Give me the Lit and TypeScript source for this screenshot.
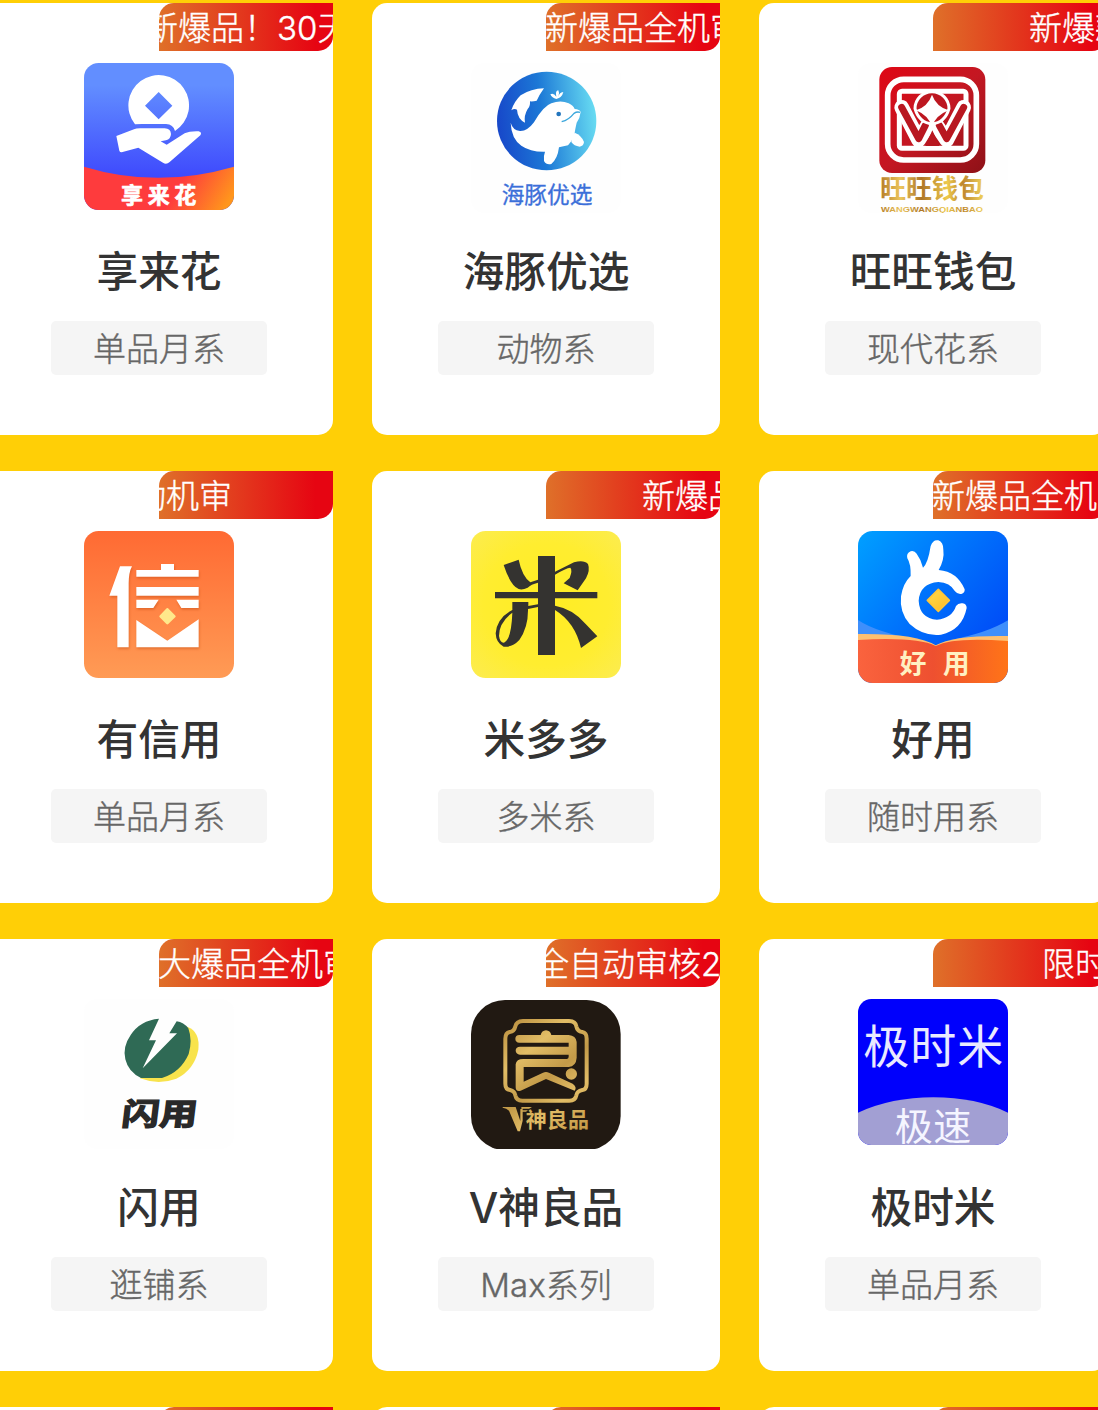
import { LitElement, html, svg, css } from "lit";
import { customElement, property } from "lit/decorators.js";

const logos: Record<string, unknown> = {
  xianglaihua: svg`<svg viewBox="30 27 450 450">
    <defs>
      <clipPath id="c"><rect x="30" y="27" width="450" height="441" rx="44"/></clipPath>
      <linearGradient id="b" x1="0" y1="0" x2="0" y2="1"><stop offset=".15" stop-color="#628eff"/><stop offset=".8" stop-color="#3d47fd"/></linearGradient>
      <linearGradient id="r" gradientUnits="userSpaceOnUse" x1="330" y1="370" x2="460" y2="450"><stop offset="0" stop-color="#fe3b3d"/><stop offset="1" stop-color="#ff961c"/></linearGradient>
    </defs>
    <g clip-path="url(#c)">
      <rect x="30" y="27" width="450" height="441" fill="url(#b)"/>
      <path d="M30 338Q250 405 480 338V468H30Z" fill="url(#r)"/>
      <path fill-rule="evenodd" d="M183 211A91 91 0 1 1 303 231Q298 211 276 210H204Q190 210 183 211ZM254 114L213 155L254 196L295 155Z" fill="#fff"/>
      <path d="M127 246L180 226Q186 223 198 223H272Q290 224 291 240Q290 256 276 259L260 262L278 272L332 238Q347 231 374 232Q385 235 379 244L287 324Q277 333 267 326L193 281L143 295Q137 295 136 290Z" fill="#fff"/>
    </g>
    <g font-size="66" font-weight="700" fill="#fff" stroke="#fff" stroke-width="2"><text x="141" y="448" textLength="226">享来花</text></g>
  </svg>`,
  haitun: svg`<svg viewBox="33 39 450 450">
    <defs><linearGradient id="b" x1="0" y1=".55" x2="1" y2=".45"><stop offset="0" stop-color="#1747c9"/><stop offset=".45" stop-color="#1c78d6"/><stop offset="1" stop-color="#68dcf2"/></linearGradient></defs>
    <rect x="33" y="39" width="450" height="450" rx="40" fill="#fefefe"/>
    <ellipse cx="260" cy="213" rx="149" ry="148" fill="url(#b)"/>
    <path d="M152 218Q158 240 180 243Q202 244 222 217Q250 168 274 160Q302 149 326 160Q340 167 344 177Q359 178 362 186Q360 205 350 218Q345 240 344 249Q340 269 324 286L297 292Q293 326 274 342Q259 346 252 333Q250 318 255 305Q211 306 184 287Q154 266 152 218Z" fill="#fff"/>
    <path d="M154 181Q163 154 182 136Q213 116 252 115Q237 136 230 152Q218 155 210 154Q211 169 203 177Q191 197 195 218Q173 207 171 179Q163 174 154 181Z" fill="#fff"/>
    <path d="M344 248Q365 256 372 276Q371 288 359 290Q342 288 334 276Q333 266 344 248Z" fill="#fff"/>
    <circle cx="296" cy="192" r="7" fill="#2375bd"/><path d="M305 215Q326 210 342 190Q351 184 360 187" fill="none" stroke="#3ca7dc" stroke-width="4"/>
    <path d="M289 147Q276 144 271 133Q281 128 289 140Q285 122 295 121Q300 130 295 141Q297 127 310 126Q306 143 289 147Z" fill="#fff"/>
    <text x="125" y="458" font-size="68" font-weight="400" fill="#3b6fd9" stroke="#3b6fd9" stroke-width="1" textLength="272">海豚优选</text>
  </svg>`,
  wangwang: svg`<svg viewBox="24 39 450 450">
    <defs>
      <linearGradient id="r" x1="0" y1="0" x2="1" y2="1"><stop offset="0" stop-color="#df0715"/><stop offset=".5" stop-color="#c41722"/><stop offset="1" stop-color="#8d1117"/></linearGradient>
      <linearGradient id="g" gradientUnits="userSpaceOnUse" x1="90" y1="0" x2="400" y2="0"><stop offset="0" stop-color="#b47b28"/><stop offset=".2" stop-color="#ecc65b"/><stop offset=".4" stop-color="#ad7527"/><stop offset=".65" stop-color="#edc94d"/><stop offset=".8" stop-color="#be862e"/><stop offset="1" stop-color="#efd15c"/></linearGradient>
    </defs>
    <rect x="24" y="39" width="450" height="450" rx="40" fill="#fefefe"/>
    <rect x="88" y="51" width="318" height="318" rx="38" fill="url(#r)"/>
    <rect x="113" y="88" width="266" height="242" rx="48" fill="none" stroke="#fff" stroke-width="17"/>
    <rect x="148" y="124" width="200" height="171" rx="8" fill="none" stroke="#fff" stroke-width="15"/>
    <g fill="none" stroke-linecap="round" stroke-linejoin="round">
      <path d="M155 172L206 270L246 205L290 270L341 172" stroke="#fff" stroke-width="44"/>
      <path d="M155 172L206 266L226 226M341 172L290 266L268 226" stroke="#b81720" stroke-width="21"/>
    </g>
    <path d="M226 288L247 241L268 288Z" fill="#b81720"/>
    <path d="M195 176A51 51 0 0 1 297 176Q285 218 246 222Q207 218 195 176Z" fill="#bd1720" stroke="#fff" stroke-width="9"/>
    <path d="M246 134Q258 169 296 181Q257 196 246 230Q235 196 198 181Q234 169 246 134Z" fill="#fff"/>
    <text x="90" y="444" font-size="78" font-weight="700" fill="url(#g)" textLength="312">旺旺钱包</text>
    <text x="93" y="487" font-size="20" font-weight="700" fill="url(#g)" textLength="306" lengthAdjust="spacingAndGlyphs" class="latin">WANGWANGQIANBAO</text>
  </svg>`,
  youxinyong: svg`<svg viewBox="30 33 450 450">
    <defs><linearGradient id="o" x1="0" y1="0" x2="0" y2="1"><stop offset="0" stop-color="#ff6a33"/><stop offset="1" stop-color="#ff9b55"/></linearGradient></defs>
    <rect x="30" y="33" width="450" height="441" rx="44" fill="url(#o)"/>
    <g fill="#fff" class="lift">
      <path d="M138 139H174Q164 158 164 190V382H130V227H106Z"/>
      <path d="M187 150H261V132H300V150H374V170H187ZM187 201H374V227H187ZM187 239H254L238 264H187ZM307 239H374V264H322ZM187 300L280 362L374 298V382H187Z"/>
    </g>
    <path d="M280 268L301 289L280 309L260 289Z" fill="#ffe88b" stroke="#ffe88b" stroke-width="8" stroke-linejoin="round"/>
  </svg>`,
  miduoduo: svg`<svg viewBox="33 33 450 450">
    <defs><radialGradient id="y" r=".7"><stop offset="0" stop-color="#ffed22"/><stop offset=".6" stop-color="#ffed30"/><stop offset="1" stop-color="#fcec50"/></radialGradient></defs>
    <rect x="33" y="33" width="450" height="441" rx="44" fill="url(#y)"/>
    <g fill="#343330">
      <path d="M234 108H285V405H234ZM105 216H412V235H105Z"/>
      <path d="M131 135L176 119Q186 168 211 187L234 179V188Q213 193 203 203Q187 211 176 207Q151 197 131 135Z"/>
      <path d="M285 155L342 127Q372 119 384 132Q391 150 378 175L353 211L311 190L329 174Q338 150 331 143Q318 144 285 164Z"/>
      <path d="M285 257Q340 267 377 312L412 349L363 384Q345 307 285 270Z"/>
      <path fill-rule="evenodd" d="M157 246H205V258L234 253V261L204 267Q205 322 178 360Q156 383 131 380Q108 369 107 340Q111 294 157 270ZM157 278Q117 308 117 348Q120 369 132 368Q154 359 157 278Z"/>
    </g>
  </svg>`,
  haoyong: svg`<svg viewBox="24 33 450 456" class="tall">
    <defs>
      <clipPath id="c"><rect x="24" y="33" width="450" height="456" rx="44"/></clipPath>
      <linearGradient id="b" x1="0" y1="0" x2="1" y2=".8"><stop offset="0" stop-color="#00a0ff"/><stop offset=".45" stop-color="#0075fc"/><stop offset="1" stop-color="#0044f6"/></linearGradient>
      <linearGradient id="o" x1="0" y1="0" x2="1" y2="0"><stop offset="0" stop-color="#fa633e"/><stop offset=".5" stop-color="#ee5030"/><stop offset="1" stop-color="#ff7418"/></linearGradient>
      <linearGradient id="g" x1="0" y1="0" x2="1" y2="1"><stop offset="0" stop-color="#ffdc4b"/><stop offset="1" stop-color="#ffb925"/></linearGradient>
    </defs>
    <g clip-path="url(#c)">
      <rect x="24" y="33" width="450" height="456" fill="url(#b)"/>
      <path d="M24 300Q80 338 215 362L24 350ZM474 301Q410 340 300 360L474 352Z" fill="#3f8ffb"/>
      <path d="M24 342Q200 340 257 376Q310 345 474 348V400H24Z" fill="#ffc070"/>
      <path d="M24 360Q200 350 257 378Q310 350 474 363V489H24Z" fill="url(#o)"/>
    </g>
    <path d="M182 168Q183 132 172 115Q168 100 182 94Q193 91 200 101Q214 120 219 143Q234 130 242 78Q249 58 265 61Q280 66 280 89Q284 118 266 150Q322 155 344 208Q345 219 334 222Q323 224 315 214Q300 187 265 186Q210 190 206 242Q209 295 261 299Q306 295 318 258Q325 248 338 250Q350 252 350 264Q337 330 273 344Q220 350 179 312Q148 278 153 229Q159 190 182 168Z" fill="#fff"/>
    <path d="M265 208L298 241L265 274L232 241Z" fill="url(#g)" stroke="#ffc638" stroke-width="5" stroke-linejoin="round"/>
    <g font-size="80" font-weight="700" fill="#fff0c2"><text x="149" y="458">好</text><text x="279" y="458">用</text></g>
  </svg>`,
  shanyong: svg`<svg viewBox="30 27 450 450">
    <rect x="30" y="27" width="450" height="450" rx="40" fill="#fefefe"/>
    <path d="M340 110Q379 125 373 179Q361 239 307 266Q253 286 198 265Z" fill="#f8e34c"/>
    <path d="M255 86Q198 91 170 135Q145 171 154 208Q163 246 201 264H264Q320 247 344 192Q356 151 343 115Q329 97 308 94L286 130H309L206 235L246 151H225Z" fill="#2f6a55"/>
    <text x="145" y="406" font-size="92" font-weight="700" fill="#292929" stroke="#292929" stroke-width="4" textLength="226" lengthAdjust="spacingAndGlyphs" class="slant">闪用</text>
  </svg>`,
  vshen: svg`<svg viewBox="33 27 450 450">
    <defs><linearGradient id="g" gradientUnits="userSpaceOnUse" x1="130" y1="90" x2="380" y2="400"><stop offset="0" stop-color="#b78b3c"/><stop offset=".3" stop-color="#e2bd66"/><stop offset=".55" stop-color="#c39a48"/><stop offset=".75" stop-color="#e2bd66"/><stop offset="1" stop-color="#c79c4a"/></linearGradient></defs>
    <rect x="33" y="30" width="449" height="450" rx="102" fill="#211912"/>
    <path d="M189 93H327Q347 94 349 109Q352 124 367 126Q380 128 380 146V281Q380 298 367 300Q351 303 349 316Q346 332 328 332H187Q169 332 166 316Q164 303 150 300Q136 298 136 281V146Q136 129 149 126Q163 124 166 109Q169 94 189 93Z" fill="none" stroke="url(#g)" stroke-width="12"/>
    <g fill="url(#g)">
      <path d="M178 135H242Q245 122 258 121Q271 122 274 135H326Q348 137 350 156V203Q348 229 326 231H191V275L249 248Q258 244 267 248L338 281Q352 291 344 302L258 267L182 302Q167 306 167 292V223Q169 207 190 207H321Q326 206 326 200V194H180Q167 193 167 181Q168 170 180 170H326V158H178Q166 157 166 146Q166 136 178 135Z"/>
      <circle cx="334" cy="252" r="17"/>
      <path d="M128 351H167L181 393V357H188V392L180 424H173L147 362Q140 354 128 353ZM184 351H216L207 356H188V361H204L198 365H185Z"/>
      <text x="197" y="411" font-size="63" font-weight="700" textLength="190">神良品</text>
    </g>
  </svg>`,
  jishimi: svg`<svg viewBox="24 27 450 450">
    <defs><clipPath id="c"><rect x="24" y="27" width="450" height="438" rx="40"/></clipPath></defs>
    <g clip-path="url(#c)">
      <rect x="24" y="27" width="450" height="438" fill="#0000fc"/>
      <path d="M24 368Q125 322 250 322Q378 322 474 368V465H24Z" fill="#a29fd3"/>
      <text x="40" y="220" font-size="138" fill="#e9e9ff" textLength="420">极时米</text>
      <text x="134" y="450" font-size="114" fill="#f5f5ff" textLength="230">极速</text>
    </g>
  </svg>`,
};

interface Product {
  name: string;
  series: string;
  promo: string;
  shift: number;
  logo: string;
}

const products: Product[] = [
  { name: "享来花", series: "单品月系", promo: "新爆品！30天", shift: -14, logo: "xianglaihua" },
  { name: "海豚优选", series: "动物系", promo: "新爆品全机审", shift: -1, logo: "haitun" },
  { name: "旺旺钱包", series: "现代花系", promo: "新爆款", shift: 96, logo: "wangwang" },
  { name: "有信用", series: "单品月系", promo: "动机审", shift: -26, logo: "youxinyong" },
  { name: "米多多", series: "多米系", promo: "新爆品", shift: 96, logo: "miduoduo" },
  { name: "好用", series: "随时用系", promo: "新爆品全机", shift: -1, logo: "haoyong" },
  { name: "闪用", series: "逛铺系", promo: "大爆品全机审", shift: -1, logo: "shanyong" },
  { name: "V神良品", series: "Max系列", promo: "全自动审核2", shift: -10, logo: "vshen" },
  { name: "极时米", series: "单品月系", promo: "限时", shift: 109, logo: "jishimi" },
  { name: "", series: "", promo: "", shift: 0, logo: "" },
  { name: "", series: "", promo: "", shift: 0, logo: "" },
  { name: "", series: "", promo: "", shift: 0, logo: "" },
];

@customElement("product-card")
export class ProductCard extends LitElement {
  @property({ attribute: false }) product!: Product;

  static styles = css`
    :host {
      display: flex;
      flex-direction: column;
      align-items: center;
      box-sizing: border-box;
      height: 432px;
      border-radius: 15px;
      background: #fff;
    }
    .promo {
      align-self: flex-end;
      flex: none;
      width: 174px;
      height: 48px;
      border-radius: 15px 0 15px 0;
      overflow: hidden;
      background: linear-gradient(90deg, #df7029, #e60512 90%);
      color: #fff;
      font-size: 33px;
      font-weight: 300;
      -webkit-text-stroke: 0.4px #fff;
      line-height: 50px;
      white-space: nowrap;
    }
    .promo-text {
      display: block;
    }
    .logo {
      flex: none;
      width: 150px;
      height: 150px;
      margin-top: 12px;
    }
    .logo svg {
      display: block;
      width: 150px;
      height: 150px;
      font-family: "Noto Sans CJK SC", sans-serif;
    }
    .logo svg.tall {
      height: 152px;
    }
    .lift {
      filter: drop-shadow(2px 5px 3px rgba(190, 70, 10, 0.45));
    }
    .latin {
      font-family: "Liberation Sans", sans-serif;
    }
    .slant {
      transform-origin: 260px 370px;
      transform: skewX(-7deg);
    }
    .name {
      margin-top: 28px;
      height: 60px;
      line-height: 62px;
      font-size: 41.7px;
      font-weight: 500;
      color: #333;
      white-space: nowrap;
    }
    .series {
      margin-top: 20px;
      width: 216px;
      height: 54px;
      border-radius: 5px;
      background: #f5f5f5;
      color: #666;
      font-size: 33px;
      font-weight: 300;
      -webkit-text-stroke: 0.4px #666;
      line-height: 56px;
      text-align: center;
      white-space: nowrap;
    }
  `;

  render() {
    const p = this.product;
    return html`
      <div class="promo"><span class="promo-text" style="margin-left:${p.shift}px">${p.promo}</span></div>
      ${p.name
        ? html`<div class="logo">${logos[p.logo]}</div>
            <div class="name">${p.name}</div>
            <div class="series">${p.series}</div>`
        : null}
    `;
  }
}

@customElement("app-root")
export class AppRoot extends LitElement {
  static styles = css`
    :host {
      display: block;
      box-sizing: border-box;
      height: 1410px;
      padding-top: 3px;
      overflow: hidden;
      background: #ffcf06;
      font-family: Inter, "Noto Sans CJK SC", sans-serif;
    }
    .grid {
      display: grid;
      grid-template-columns: repeat(3, 348px);
      gap: 36px 39px;
      margin-left: -15px;
    }
  `;

  render() {
    return html`<div class="grid">
      ${products.map((p) => html`<product-card .product=${p}></product-card>`)}
    </div>`;
  }
}
